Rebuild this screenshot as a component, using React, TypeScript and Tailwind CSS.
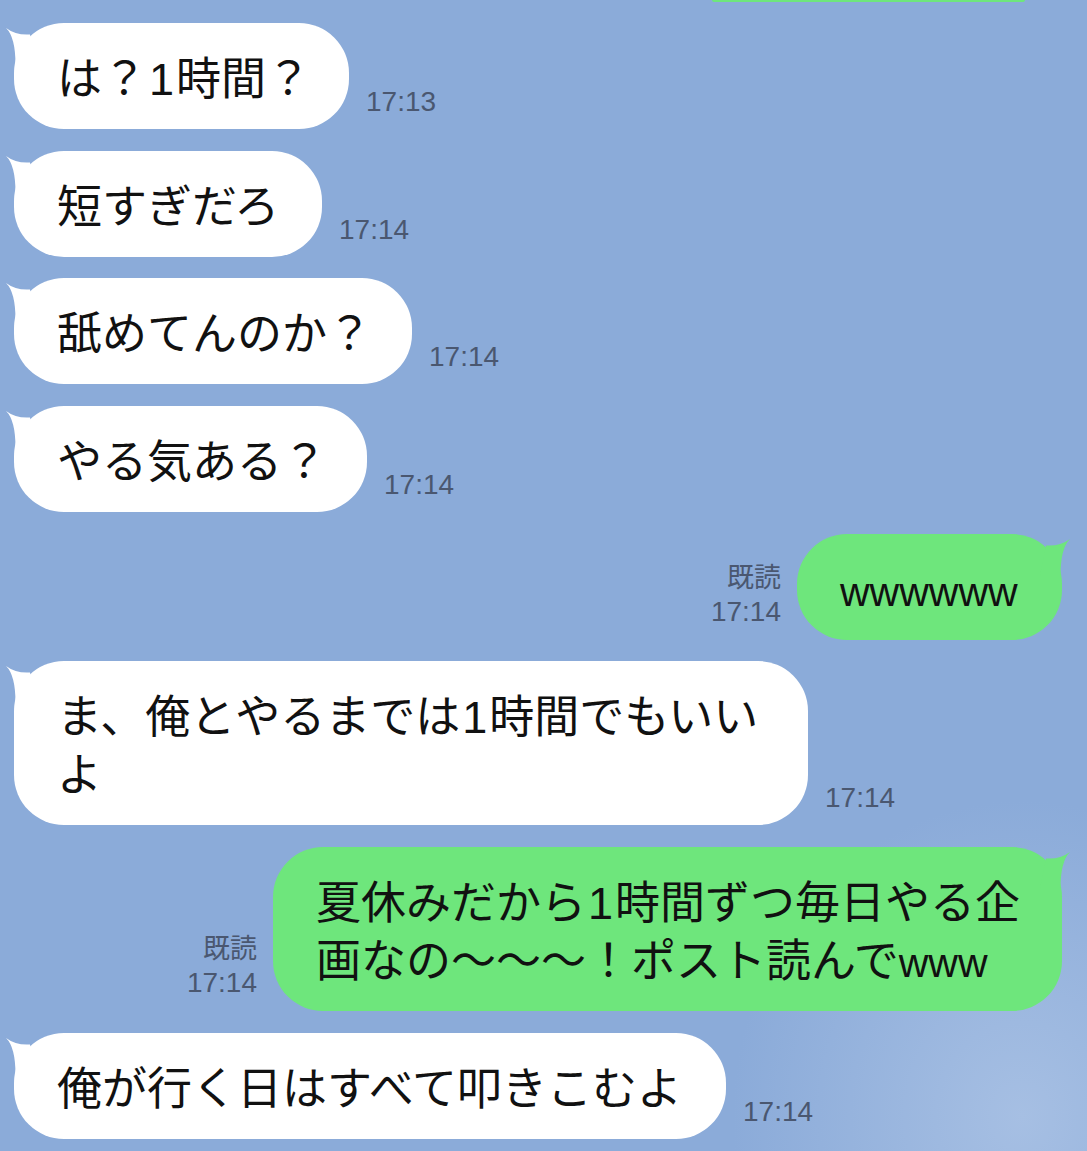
import type { ReactNode } from "react";

const WHITE = "#ffffff";
const GREEN = "#6ee67c";

// horn on the top corner of a bubble (drawn for the left side, mirrored for the right)
function Tail({ color, side }: { color: string; side: "left" | "right" }) {
  return (
    <svg
      aria-hidden
      viewBox="0 0 60 50"
      className={
        side === "left"
          ? "absolute -left-[10px] top-0 w-[60px] h-[50px]"
          : "absolute -right-[10px] top-0 w-[60px] h-[50px] -scale-x-100"
      }
    >
      <path d="M 2 5 Q 12 12.5 26 11.5 L 32 42 L 11.5 42 Q 11.5 14 2 5 Z" fill={color} />
    </svg>
  );
}

// latin bits read closer to the phone's font in Liberation Sans
function L({ children, w }: { children: ReactNode; w?: boolean }) {
  return (
    <span
      className={
        "font-['Liberation_Sans',sans-serif] leading-[0px] " + (w ? "text-[41px]" : "mx-[2px]")
      }
    >
      {children}
    </span>
  );
}

function Bubble({
  side,
  width,
  children,
}: {
  side: "left" | "right";
  width: string;
  children: ReactNode;
}) {
  const color = side === "left" ? WHITE : GREEN;
  return (
    <div
      className={
        "relative shrink-0 rounded-[50px] pl-[43px] py-[24px] text-[45px] leading-[58px] text-[#111111] whitespace-nowrap " +
        width +
        (side === "left" ? " bg-white" : " bg-[#6ee67c]")
      }
    >
      <Tail color={color} side={side} />
      <span className="relative">{children}</span>
    </div>
  );
}

function Received({ text, time, width }: { text: ReactNode; time: string; width: string }) {
  return (
    <div className="flex items-end gap-[17px]">
      <Bubble side="left" width={width}>
        {text}
      </Bubble>
      <span className="mb-[10px] font-['Liberation_Sans',sans-serif] text-[28px] leading-[34px] text-[#4a5770]">
        {time}
      </span>
    </div>
  );
}

function Sent({ text, time, width }: { text: ReactNode; time: string; width: string }) {
  return (
    <div className="flex items-end justify-end gap-[16px]">
      <div className="mb-[10px] flex flex-col items-end leading-[36px] text-[#4a5770]">
        <span className="text-[27px]">既読</span>
        <span className="font-['Liberation_Sans',sans-serif] text-[28px]">{time}</span>
      </div>
      <Bubble side="right" width={width}>
        {text}
      </Bubble>
    </div>
  );
}

export default function App() {
  return (
    <div className="h-[1151px] w-full overflow-hidden bg-[#8babd9] bg-[radial-gradient(ellipse_at_94%_97%,#a6bfe3_0%,#8babd9_20%)] font-['Noto_Sans_CJK_JP',sans-serif]">
      <div className="flex flex-col gap-[21.7px] pl-[14px] pr-[25px]">
        {/* tail end of the previous sent message */}
        <div className="flex justify-end -mb-[0.7px]">
          <div className="h-[2px] w-[313px] mr-[37px] rounded-b-full bg-[#6ee67c]" />
        </div>

        <Received width="w-[335px]" text={<>は？<L>1</L>時間？</>} time="17:13" />
        <Received width="w-[308px]" text="短すぎだろ" time="17:14" />
        <Received width="w-[398px]" text="舐めてんのか？" time="17:14" />
        <Received width="w-[353px]" text="やる気ある？" time="17:14" />
        <Sent width="w-[265px]" text={<L w>wwwwww</L>} time="17:14" />
        <Received
          width="w-[794px]"
          text={
            <>
              ま、俺とやるまでは<L>1</L>時間でもいい
              <br />よ
            </>
          }
          time="17:14"
        />
        <Sent
          width="w-[789px]"
          text={
            <>
              夏休みだから<L>1</L>時間ずつ毎日やる企
              <br />
              画なの〜〜〜！ポスト読んで<L w>www</L>
            </>
          }
          time="17:14"
        />
        <Received width="w-[712px]" text="俺が行く日はすべて叩きこむよ" time="17:14" />
      </div>
    </div>
  );
}
